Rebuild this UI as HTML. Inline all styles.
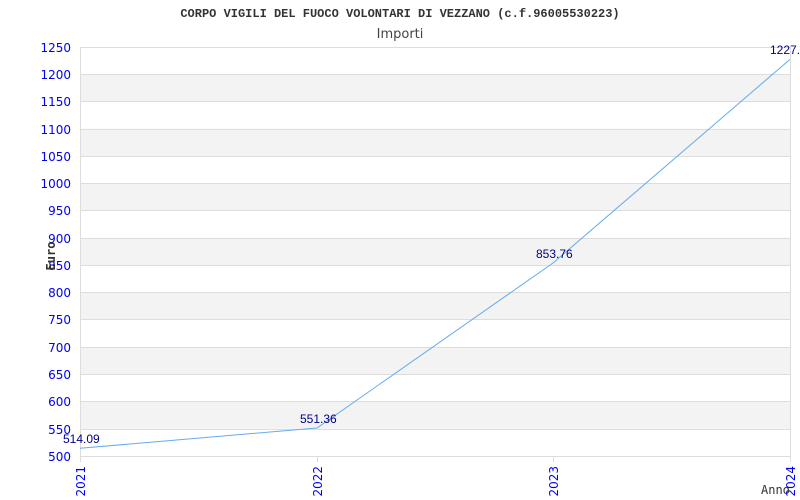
<!DOCTYPE html>
<html><head><meta charset="utf-8"><style>body{margin:0;background:#fff}svg{display:block}</style></head><body>
<svg width="800" height="500" xmlns="http://www.w3.org/2000/svg">
<rect width="800" height="500" fill="#fff"/>
<g id="bands">
<rect x="80" y="74.27" width="710" height="27.27" fill="#f3f3f3"/>
<rect x="80" y="128.8" width="710" height="27.27" fill="#f3f3f3"/>
<rect x="80" y="183.33" width="710" height="27.27" fill="#f3f3f3"/>
<rect x="80" y="237.87" width="710" height="27.27" fill="#f3f3f3"/>
<rect x="80" y="292.4" width="710" height="27.27" fill="#f3f3f3"/>
<rect x="80" y="346.93" width="710" height="27.27" fill="#f3f3f3"/>
<rect x="80" y="401.47" width="710" height="27.27" fill="#f3f3f3"/>
</g>
<g stroke="#dddddd" stroke-width="1">
<line x1="80" y1="47.5" x2="790" y2="47.5"/><line x1="80" y1="74.5" x2="790" y2="74.5"/><line x1="80" y1="101.5" x2="790" y2="101.5"/><line x1="80" y1="129.5" x2="790" y2="129.5"/><line x1="80" y1="156.5" x2="790" y2="156.5"/><line x1="80" y1="183.5" x2="790" y2="183.5"/><line x1="80" y1="210.5" x2="790" y2="210.5"/><line x1="80" y1="238.5" x2="790" y2="238.5"/><line x1="80" y1="265.5" x2="790" y2="265.5"/><line x1="80" y1="292.5" x2="790" y2="292.5"/><line x1="80" y1="319.5" x2="790" y2="319.5"/><line x1="80" y1="347.5" x2="790" y2="347.5"/><line x1="80" y1="374.5" x2="790" y2="374.5"/><line x1="80" y1="401.5" x2="790" y2="401.5"/><line x1="80" y1="429.5" x2="790" y2="429.5"/><line x1="80" y1="456.5" x2="790" y2="456.5"/>
<line x1="80.5" y1="47" x2="80.5" y2="462"/><line x1="790.5" y1="47" x2="790.5" y2="462"/>
<line x1="317.5" y1="456" x2="317.5" y2="462"/><line x1="553.5" y1="456" x2="553.5" y2="462"/>
</g>
<polyline points="80,448.3 317,428 553,263 790,59.4" fill="none" stroke="#66aaee" stroke-width="1"/>
<g font-family="DejaVu Sans, sans-serif" font-size="12" fill="#0000ee" text-anchor="end">
<text x="71" y="52">1250</text><text x="71" y="79">1200</text><text x="71" y="106">1150</text><text x="71" y="134">1100</text><text x="71" y="161">1050</text><text x="71" y="188">1000</text><text x="71" y="215">950</text><text x="71" y="243">900</text><text x="71" y="270">850</text><text x="71" y="297">800</text><text x="71" y="324">750</text><text x="71" y="352">700</text><text x="71" y="379">650</text><text x="71" y="406">600</text><text x="71" y="434">550</text><text x="71" y="461">500</text>
</g>
<g font-family="DejaVu Sans, sans-serif" font-size="12" fill="#0000ee" text-anchor="end">
<text transform="translate(85,466) rotate(-90)">2021</text>
<text transform="translate(322,466) rotate(-90)">2022</text>
<text transform="translate(558,466) rotate(-90)">2023</text>
<text transform="translate(795,466) rotate(-90)">2024</text>
</g>
<g font-family="Liberation Sans, sans-serif" font-size="12" fill="#000088">
<text x="63" y="443">514.09</text><text x="300" y="423">551.36</text><text x="536" y="258">853.76</text><text x="770" y="54">1227.1</text>
</g>
<text x="400" y="17" text-anchor="middle" font-family="Liberation Mono, monospace" font-weight="bold" font-size="12" fill="#333">CORPO VIGILI DEL FUOCO VOLONTARI DI VEZZANO (c.f.96005530223)</text>
<text x="400" y="38" text-anchor="middle" font-family="DejaVu Sans, sans-serif" font-size="13" fill="#444">Importi</text>
<text transform="translate(55,256) rotate(-90)" text-anchor="middle" font-family="DejaVu Sans Mono, monospace" font-weight="bold" font-size="12" fill="#333">Euro</text>
<text x="761" y="494" font-family="DejaVu Sans Mono, monospace" font-size="12" fill="#333">Anno</text>
</svg>
</body></html>
